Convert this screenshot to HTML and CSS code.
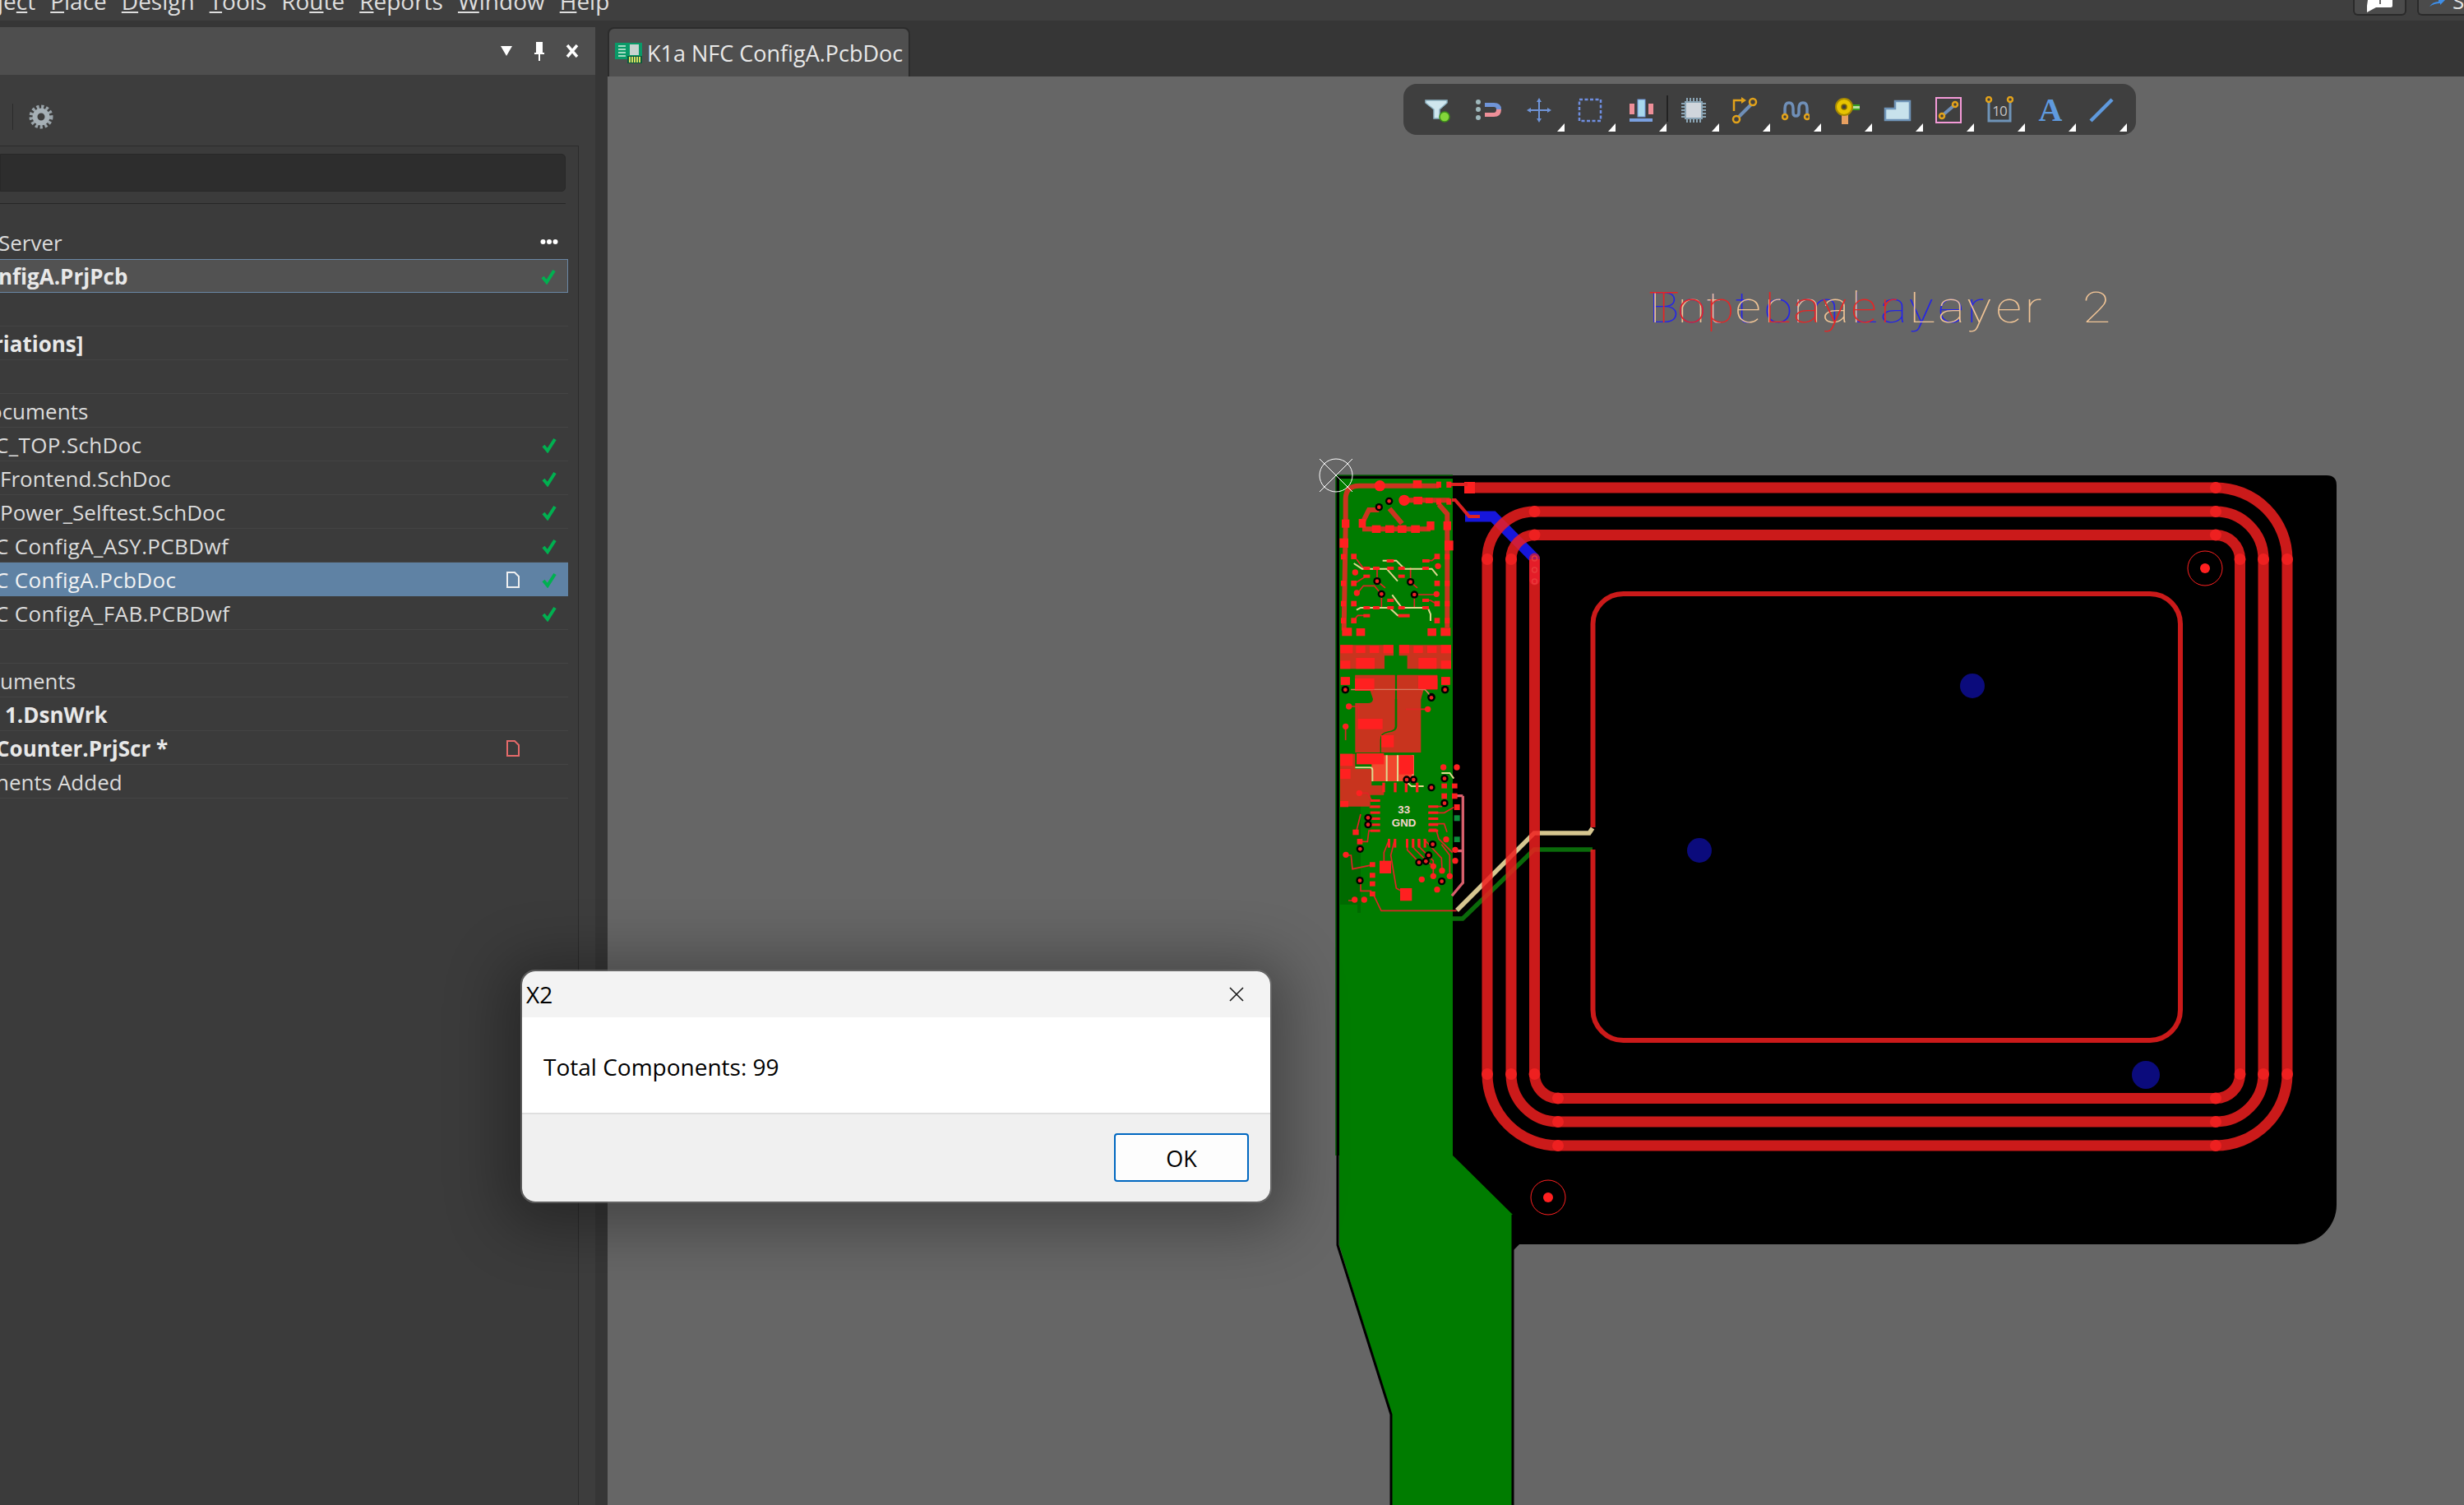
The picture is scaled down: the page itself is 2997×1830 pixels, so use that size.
FILE: index.html
```html
<!DOCTYPE html>
<html lang="en">
<head>
    <meta charset="UTF-8">
    <title>K1a NFC ConfigA.PcbDoc</title>
    <link rel="stylesheet" href="styles.css">
</head>
<body>
    <header class="menu-bar">
        <nav class="menu">
            <span class="menu-first">je<u>c</u>t</span>
            <span><u>P</u>lace</span>
            <span><u>D</u>esign</span>
            <span><u>T</u>ools</span>
            <span>Ro<u>u</u>te</span>
            <span><u>R</u>eports</span>
            <span><u>W</u>indow</span>
            <span><u>H</u>elp</span>
        </nav>
        <div class="top-buttons">
            <div class="top-btn">
                <svg width="34" height="19" viewBox="0 0 34 19"><path class="i-white" d="M2 0H32V7Q32 9 30 9H12L1 15V9Q1 9 1 7Z"/><path class="i-plus" d="M17 0V5"/></svg>
            </div>
            <div class="top-btn top-btn-share">
                <svg width="20" height="8" viewBox="0 0 20 8"><path class="i-share" d="M0 8Q4 2 11 2V0L19 0L13 6V4Q6 4 0 8Z"/></svg>
                <span>Share</span>
            </div>
        </div>
    </header>

    <main class="main">
        <aside class="panel">
            <div class="panel-head">
                <svg width="16" height="14" viewBox="0 0 16 14"><path class="i-white" d="M1 1H15L8 13Z"/></svg>
                <svg width="14" height="24" viewBox="0 0 14 24"><path class="i-white" d="M3 1H11V14H13V16H8V24H6V16H1V14H3Z"/></svg>
                <svg width="16" height="16" viewBox="0 0 16 16"><path class="i-close" d="M2 1L14 15M14 1L2 15"/></svg>
            </div>
            <div class="panel-tools">
                <span class="tool-sep"></span>
                <svg class="gear" width="30" height="30" viewBox="0 0 30 30">
                    <circle class="gear-teeth" cx="15" cy="15" r="11.5"/>
                    <circle class="gear-ring" cx="15" cy="15" r="7.5"/>
                </svg>
            </div>
            <div class="project-box">
                <div class="search"></div>
                <div class="search-line"></div>
                <div class="tree">
                    <div class="row"><span class="name clip-1">Server</span><span></span><svg class="dots" width="22" height="8" viewBox="0 0 22 8"><circle cx="3.5" cy="4" r="3"/><circle cx="11" cy="4" r="3"/><circle cx="18.5" cy="4" r="3"/></svg></div>
                    <div class="row row-bold row-active"><span class="name clip-1">nfigA.PrjPcb</span><span></span><svg class="check" width="18" height="20" viewBox="0 0 18 20"><path d="M2 11L7 17L16 3"/></svg></div>
                    <div class="row"></div>
                    <div class="row row-bold"><span class="name clip-4">riations]</span></div>
                    <div class="row"></div>
                    <div class="row"><span class="name clip-5">ocuments</span></div>
                    <div class="row"><span class="name clip-3">C_TOP.SchDoc</span><span></span><svg class="check" width="18" height="20" viewBox="0 0 18 20"><path d="M2 11L7 17L16 3"/></svg></div>
                    <div class="row"><span class="name">Frontend.SchDoc</span><span></span><svg class="check" width="18" height="20" viewBox="0 0 18 20"><path d="M2 11L7 17L16 3"/></svg></div>
                    <div class="row"><span class="name">Power_Selftest.SchDoc</span><span></span><svg class="check" width="18" height="20" viewBox="0 0 18 20"><path d="M2 11L7 17L16 3"/></svg></div>
                    <div class="row"><span class="name clip-3">C ConfigA_ASY.PCBDwf</span><span></span><svg class="check" width="18" height="20" viewBox="0 0 18 20"><path d="M2 11L7 17L16 3"/></svg></div>
                    <div class="row row-selected"><span class="name clip-3">C ConfigA.PcbDoc</span><svg class="doc" width="18" height="20" viewBox="0 0 18 20"><path d="M2 1H11L16 6V19H2Z"/></svg><svg class="check" width="18" height="20" viewBox="0 0 18 20"><path d="M2 11L7 17L16 3"/></svg></div>
                    <div class="row"><span class="name clip-3">C ConfigA_FAB.PCBDwf</span><span></span><svg class="check" width="18" height="20" viewBox="0 0 18 20"><path d="M2 11L7 17L16 3"/></svg></div>
                    <div class="row"></div>
                    <div class="row"><span class="name">uments</span></div>
                    <div class="row row-bold"><span class="name name-in">1.DsnWrk</span></div>
                    <div class="row row-bold"><span class="name clip-2">Counter.PrjScr *</span><svg class="doc doc-red" width="18" height="20" viewBox="0 0 18 20"><path d="M2 1H11L16 6V19H2Z"/></svg></div>
                    <div class="row"><span class="name clip-2">nents Added</span></div>
                </div>
            </div>
        </aside>

        <section class="workspace">
            <div class="tabs">
                <div class="tab">
                    <svg class="tab-icon" width="34" height="26" viewBox="0 0 34 26">
                        <rect x="0" y="1" width="33" height="20" fill="#0a9a68"/>
                        <path d="M4 5H13M4 9H13M4 13H13M4 17H13" stroke="#d8f0e0" stroke-width="1.5"/>
                        <rect x="18" y="3" width="11" height="13" fill="#c8d4d0"/>
                        <rect x="15" y="17" width="18" height="9" fill="#0a5a3c"/>
                        <path d="M18 18V25M21 18V25M24 18V25M27 18V25M30 18V25" stroke="#d8e060" stroke-width="2"/>
                    </svg>
                    <span>K1a NFC ConfigA.PcbDoc</span>
                </div>
            </div>
            <div class="canvas">
                <svg class="pcb" width="2258" height="1737" viewBox="739 93 2258 1737">
                    <!-- overlaid layer names, glyphs stretched to the wide stroke font -->
                    <g class="layer-text" transform="translate(2005 392) scale(1.2 1)">
                        <text class="lt-blue" x="0 29.3 58.7 88 117.3 146.7 176 205.300 234.700 264 293.300 322.700" y="0">Bottom Layer</text>
                        <text class="lt-tan" x="0 29.3 58.7 88 117.3 146.7 176 205.300 234.700 264 293.300 322.700 352 381.300 410.700 440" y="0">Internal Layer 2</text>
                        <text class="lt-red" x="0 29.3 58.7 88 117.3 146.7 176 205.300 234.700" y="0">Top Layer</text>
                    </g>

                    <!-- board outline -->
                    <path class="board" d="M1625 578H2830Q2842 578 2842 590V1465A49 48 0 0 1 2793 1513H1848L1841 1520V1560H1767V1405L1625 1405Z"/>
                    <path class="flex" d="M1629 582H1767V1405L1840 1477V1830H1692V1720L1629 1514Z"/>
                    <path class="flex-shade" d="M1630 980H1653V1100H1630ZM1651 980H1655V1110H1651Z"/>
                    <path class="flex-edge" d="M1627 582V1514L1692 1720V1830M1840 1477V1830"/>
                    <path class="flex-line" d="M1625 1405V578H1767"/>

                    <!-- traces under the coil -->
                    <path class="t-tan" d="M1937 1007L1933 1013H1866L1772 1107"/>
                    <path class="t-green" d="M1937 1033H1866L1779 1117H1767"/>
                    <path class="t-blue" d="M1782 628H1816L1866.5 679"/>
                    <path class="t-blue-via" d="M1866.5 679V705"/>

                    <!-- coil -->
                    <path class="coil" d="M1787 593H2695A87 87 0 0 1 2782 680V1306A87 87 0 0 1 2695 1393H1895A86 87 0 0 1 1809 1306V680A57.5 58 0 0 1 1866.5 622H2695A58 58 0 0 1 2753 680V1306A58 58 0 0 1 2695 1364H1895A57 58 0 0 1 1838 1306V680A29 29.5 0 0 1 1866.5 650.5H2695A29.5 29.5 0 0 1 2724.5 680V1306A29.5 29.5 0 0 1 2695 1335.5H1895A28.5 29.5 0 0 1 1866.5 1306V680"/>
                    <rect class="pad" x="1781" y="586" width="13" height="14"/>
                    <g class="node">
                        <circle cx="2695" cy="593" r="7"/><circle cx="2695" cy="622" r="7"/><circle cx="2695" cy="650.5" r="7"/>
                        <circle cx="2782" cy="680" r="7"/><circle cx="2753" cy="680" r="7"/><circle cx="2724.5" cy="680" r="7"/>
                        <circle cx="2782" cy="1306" r="7"/><circle cx="2753" cy="1306" r="7"/><circle cx="2724.5" cy="1306" r="7"/>
                        <circle cx="2695" cy="1393" r="7"/><circle cx="2695" cy="1364" r="7"/><circle cx="2695" cy="1335.5" r="7"/>
                        <circle cx="1895" cy="1393" r="7"/><circle cx="1895" cy="1364" r="7"/><circle cx="1895" cy="1335.5" r="7"/>
                        <circle cx="1809" cy="1306" r="7"/><circle cx="1838" cy="1306" r="7"/><circle cx="1866.5" cy="1306" r="7"/>
                        <circle cx="1809" cy="680" r="7"/><circle cx="1838" cy="680" r="7"/>
                        <circle cx="1866.5" cy="622" r="7"/><circle cx="1866.5" cy="650.5" r="7"/>
                    </g>
                    <path class="coil coil-inner" d="M1937.5 1006V760A37 37 0 0 1 1975 722H2615A37 37 0 0 1 2652 760V1228A37 37 0 0 1 2615 1265H1975A37 37 0 0 1 1937.5 1228V1033"/>
                    <path class="t-thin" d="M1762 589H1785M1766 608H1770L1787 628H1800"/>
                    <circle class="via-hole" cx="1866.5" cy="679" r="3"/><circle class="via-hole" cx="1866.5" cy="693" r="3"/><circle class="via-hole" cx="1866.5" cy="707" r="3"/>

                    <!-- fiducials and mounting holes -->
                    <circle class="fid" cx="2399" cy="834" r="15"/>
                    <circle class="fid" cx="2067" cy="1034" r="15"/>
                    <circle class="fid" cx="2610" cy="1307" r="17"/>
                    <circle class="mount" cx="2682" cy="691" r="21"/><circle class="pad" cx="2682" cy="691" r="6"/>
                    <circle class="mount" cx="1883" cy="1456" r="21"/><circle class="pad" cx="1883" cy="1456" r="6"/>

                    <!-- upper part of the flex -->
                    <g transform="translate(1600 550) scale(.3333)">
                        <path class="copper" d="M90 703H285V742H252V790H90ZM305 703H495V790H335V742H305ZM145 812H290V900H210L200 870H145ZM298 812H445V865H395L385 900H298Z"/>
                        <path class="tr-w" d="M104 650L110 270V170Q110 122 160 122H450M324 175H490M450 190L481 225V640M171 258L195 210H232M270 205L316 260M171 280H420"/>
                        <path class="tr-n" d="M150 390L175 423M140 480L185 452M155 512L175 487H215L240 517M225 470L255 495M347 473L372 495M361 519H440M390 540H420L440 552M140 612L155 595H195M390 395H425L443 380M241 517V570M347 473V420M361 519V570M225 470V425"/>
                        <path class="tr-tan" d="M140 405L170 425H260L300 470M245 395H295L325 425H425L445 450M150 575L165 567H270L300 595H340M280 520L315 567H410L420 590V615"/>
                        <path class="tr-salmon" d="M130 866H400L420 885"/>
                        <g class="pad">
                            <circle cx="235" cy="122" r="20"/><circle cx="324" cy="175" r="20"/>
                            <rect x="356" y="102" width="32" height="28"/><rect x="441" y="107" width="18" height="22"/><rect x="478" y="107" width="18" height="22"/>
                            <rect x="358" y="162" width="32" height="28"/><rect x="402" y="166" width="26" height="20"/><rect x="441" y="169" width="18" height="22"/><rect x="478" y="169" width="18" height="22"/>
                            <rect x="96" y="245" width="28" height="30"/><rect x="88" y="314" width="32" height="34"/><rect x="93" y="371" width="18" height="20"/><rect x="93" y="468" width="18" height="20"/><rect x="93" y="542" width="18" height="20"/><rect x="93" y="604" width="18" height="20"/>
                            <rect x="97" y="640" width="36" height="30"/><rect x="149" y="642" width="32" height="28"/>
                            <rect x="467" y="252" width="28" height="32"/><rect x="471" y="322" width="32" height="36"/><rect x="472" y="371" width="18" height="20"/><rect x="472" y="468" width="18" height="20"/><rect x="472" y="542" width="18" height="20"/><rect x="472" y="604" width="18" height="20"/>
                            <rect x="457" y="640" width="36" height="30"/><rect x="409" y="642" width="32" height="28"/>
                            <rect x="158" y="243" width="26" height="32"/><rect x="206" y="266" width="32" height="28"/><rect x="255" y="266" width="32" height="28"/><rect x="300" y="266" width="32" height="28"/><rect x="349" y="266" width="32" height="28"/><rect x="406" y="252" width="28" height="32"/>
                            <rect x="130" y="370" width="20" height="20"/><rect x="434" y="370" width="20" height="20"/>
                            <rect x="130" y="468" width="20" height="20"/><rect x="434" y="468" width="20" height="20"/>
                            <rect x="130" y="542" width="20" height="20"/><rect x="434" y="542" width="20" height="20"/>
                            <rect x="130" y="604" width="20" height="20"/><rect x="434" y="604" width="20" height="20"/>
                            <circle cx="145" cy="438" r="11"/><circle cx="447" cy="415" r="11"/><circle cx="151" cy="513" r="11"/><circle cx="442" cy="517" r="11"/>
                            <rect x="175" y="417" width="24" height="12"/><rect x="210" y="417" width="24" height="12"/><rect x="262" y="417" width="24" height="12"/><rect x="302" y="417" width="24" height="12"/><rect x="390" y="417" width="24" height="12"/>
                            <rect x="175" y="561" width="24" height="12"/><rect x="210" y="561" width="24" height="12"/><rect x="262" y="561" width="24" height="12"/><rect x="302" y="561" width="24" height="12"/><rect x="390" y="561" width="24" height="12"/>
                            <rect x="260" y="390" width="26" height="12"/><rect x="390" y="390" width="26" height="12"/><rect x="175" y="446" width="24" height="12"/><rect x="302" y="446" width="24" height="12"/><rect x="262" y="534" width="24" height="12"/><rect x="390" y="534" width="24" height="12"/><rect x="175" y="590" width="24" height="12"/><rect x="302" y="590" width="42" height="12"/>
                            <rect x="91" y="703" width="45" height="30"/><rect x="148" y="706" width="34" height="26"/><rect x="198" y="706" width="34" height="26"/><rect x="248" y="703" width="36" height="30"/>
                            <rect x="306" y="703" width="36" height="30"/><rect x="358" y="706" width="34" height="26"/><rect x="408" y="706" width="34" height="26"/><rect x="458" y="703" width="37" height="30"/>
                            <rect x="91" y="760" width="36" height="30"/><rect x="148" y="750" width="68" height="40"/><rect x="376" y="750" width="66" height="40"/><rect x="458" y="760" width="37" height="30"/>
                            <rect x="93" y="820" width="32" height="28"/><rect x="459" y="820" width="32" height="28"/><rect x="145" y="825" width="70" height="45"/><rect x="375" y="825" width="70" height="40"/>
                        </g>
                        <g class="via"><circle cx="232" cy="200" r="14"/><circle cx="269" cy="178" r="14"/><circle cx="225" cy="470" r="14"/><circle cx="347" cy="473" r="14"/><circle cx="241" cy="517" r="14"/><circle cx="361" cy="519" r="14"/><circle cx="109" cy="866" r="14"/><circle cx="473" cy="866" r="14"/><circle cx="423" cy="892" r="14"/></g>
                        <g class="via-c"><circle cx="232" cy="200" r="7"/><circle cx="269" cy="178" r="7"/><circle cx="225" cy="470" r="7"/><circle cx="347" cy="473" r="7"/><circle cx="241" cy="517" r="7"/><circle cx="361" cy="519" r="7"/><circle cx="109" cy="866" r="7"/><circle cx="473" cy="866" r="7"/><circle cx="423" cy="892" r="7"/></g>
                    </g>

                    <!-- chip area of the flex -->
                    <g transform="translate(1600 820) scale(.3333)">
                        <path class="copper" d="M145 5H290V190Q290 205 265 208Q236 212 236 240V285H145V105H190Q210 105 210 90V55H145ZM298 5H385V285H240V240Q240 215 265 212Q298 210 298 190ZM90 290H145V345H205V405H250V440H200V482H90Z"/>
                        <path class="copper-lite" d="M205 295H360V390H205Z"/>
                        <path class="tr-n" d="M122 117H158V180M330 127H410M110 190V240M160 433H190L205 460H235M197 485H235M165 510L150 570M160 610H190L195 570H235M270 600L250 650V690M290 600L275 660L295 780L330 800M335 600V640L378 686M355 600V630L405 680L430 700M375 600V625L430 680V735M395 600L460 670L462 715M460 620L490 660V735M415 545H470L480 575M415 565H440L450 600L500 650M412 482H460L470 470M412 505H470L505 485M110 660H130L135 710L208 695M210 800L240 862H515M165 750V790H205M120 825H145"/>
                        <path class="tr-tan" d="M145 340H200Q208 340 208 350V390M260 295V390M300 295V390M355 295V370M330 390L350 408H395M460 360H490L505 380"/>
                        <path class="tr-salmon" d="M130 55H400L420 80"/>
                        <path class="tr-pink" d="M538 443V760L498 808M508 443H538M508 644H538"/>
                        <g class="pad">
                            <rect x="92" y="10" width="34" height="28"/><rect x="459" y="10" width="32" height="28"/><rect x="145" y="15" width="70" height="40"/><rect x="375" y="5" width="70" height="48"/>
                            <circle cx="122" cy="117" r="11"/><circle cx="410" cy="127" r="11"/><circle cx="110" cy="190" r="11"/>
                            <rect x="155" y="162" width="90" height="38"/><rect x="240" y="222" width="46" height="44"/>
                            <rect x="150" y="288" width="100" height="40"/><rect x="90" y="290" width="46" height="44"/><rect x="90" y="345" width="38" height="36"/><rect x="90" y="462" width="30" height="22"/>
                            <rect x="306" y="295" width="52" height="70"/>
                            <circle cx="467" cy="339" r="11"/><circle cx="516" cy="339" r="11"/><circle cx="160" cy="433" r="11"/>
                            <rect x="460" y="398" width="20" height="18"/><rect x="498" y="398" width="20" height="18"/><rect x="460" y="434" width="20" height="20"/><rect x="498" y="434" width="20" height="20"/><rect x="506" y="474" width="21" height="21"/>
                            <rect x="136" y="566" width="22" height="20"/><rect x="152" y="600" width="20" height="20"/>
                            <circle cx="477" cy="602" r="11"/><circle cx="510" cy="640" r="11"/><circle cx="510" cy="680" r="11"/><circle cx="111" cy="658" r="11"/>
                            <rect x="234" y="680" width="42" height="46"/><rect x="309" y="780" width="43" height="46"/>
                            <rect x="198" y="685" width="20" height="18"/><rect x="198" y="724" width="20" height="18"/><rect x="198" y="755" width="20" height="18"/><rect x="198" y="792" width="20" height="18"/>
                            <circle cx="430" cy="700" r="11"/><circle cx="430" cy="736" r="11"/><circle cx="462" cy="716" r="11"/><circle cx="490" cy="736" r="11"/><circle cx="388" cy="748" r="11"/><circle cx="444" cy="785" r="11"/><circle cx="143" cy="822" r="11"/><circle cx="178" cy="822" r="11"/>
                            <rect x="244" y="395" width="10" height="35"/><rect x="286" y="395" width="10" height="35"/><rect x="326" y="395" width="10" height="35"/><rect x="366" y="395" width="10" height="35"/>
                            <rect x="200" y="456" width="36" height="9"/><rect x="200" y="478" width="36" height="9"/><rect x="200" y="500" width="36" height="9"/><rect x="200" y="522" width="36" height="9"/><rect x="200" y="544" width="36" height="9"/><rect x="200" y="566" width="36" height="9"/>
                            <rect x="412" y="478" width="36" height="9"/><rect x="412" y="500" width="36" height="9"/><rect x="412" y="522" width="36" height="9"/><rect x="412" y="544" width="36" height="9"/><rect x="412" y="566" width="36" height="9"/>
                            <rect x="264" y="600" width="9" height="32"/><rect x="286" y="600" width="9" height="32"/><rect x="330" y="600" width="9" height="32"/><rect x="352" y="600" width="9" height="32"/><rect x="374" y="600" width="9" height="32"/><rect x="395" y="600" width="9" height="32"/>
                        </g>
                        <g class="pad-green"><rect x="506" y="514" width="21" height="21"/><rect x="506" y="592" width="21" height="20"/></g>
                        <g class="via"><circle cx="109" cy="56" r="14"/><circle cx="473" cy="56" r="14"/><circle cx="423" cy="85" r="14"/><circle cx="333" cy="384" r="14"/><circle cx="358" cy="384" r="14"/><circle cx="423" cy="413" r="14"/><circle cx="471" cy="380" r="14"/><circle cx="471" cy="470" r="14"/><circle cx="192" cy="523" r="14"/><circle cx="192" cy="548" r="14"/><circle cx="163" cy="637" r="14"/><circle cx="428" cy="620" r="14"/><circle cx="413" cy="660" r="14"/><circle cx="378" cy="686" r="14"/><circle cx="403" cy="682" r="14"/><circle cx="461" cy="755" r="14"/><circle cx="162" cy="752" r="14"/></g>
                        <g class="via-c"><circle cx="109" cy="56" r="7"/><circle cx="473" cy="56" r="7"/><circle cx="423" cy="85" r="7"/><circle cx="333" cy="384" r="7"/><circle cx="358" cy="384" r="7"/><circle cx="423" cy="413" r="7"/><circle cx="471" cy="380" r="7"/><circle cx="471" cy="470" r="7"/><circle cx="192" cy="523" r="7"/><circle cx="192" cy="548" r="7"/><circle cx="163" cy="637" r="7"/><circle cx="428" cy="620" r="7"/><circle cx="413" cy="660" r="7"/><circle cx="378" cy="686" r="7"/><circle cx="403" cy="682" r="7"/><circle cx="461" cy="755" r="7"/><circle cx="162" cy="752" r="7"/></g>
                        <text class="silk" x="323" y="508">33</text>
                        <text class="silk" x="323" y="554">GND</text>
                    </g>

                    <!-- origin marker -->
                    <g class="origin"><circle cx="1625" cy="578" r="20"/><path d="M1605 558L1645 598M1645 558L1605 598"/></g>
                </svg>

                <div class="pcb-toolbar">
                    <div class="tool"><svg width="34" height="34" viewBox="0 0 34 34"><path fill="#cfe6ee" stroke="#8fb4c4" stroke-width="1.5" d="M3 5H29V8L20 16V27H13V16L3 8Z"/><circle cx="26" cy="25" r="6" fill="#84d63a" stroke="#3f8f1a" stroke-width="1.5"/></svg></div>
                    <div class="tool"><svg width="34" height="34" viewBox="0 0 34 34"><circle cx="5" cy="7" r="3" fill="#9fb8bc"/><circle cx="5" cy="16" r="3" fill="#9fb8bc"/><circle cx="5" cy="26" r="3" fill="#9fb8bc"/><path fill="#6f94d8" d="M13 8H24Q33 8 33 16H27Q27 13 24 13H13Z"/><path fill="#ee8f98" d="M13 20H24Q27 20 27 16H33Q33 25 24 25H13Z"/></svg></div>
                    <div class="tool tool-more"><svg width="34" height="34" viewBox="0 0 34 34"><path class="i-move" d="M17 4V30M4 17H30"/><path class="i-move-head" d="M17 2L20 7H14ZM17 32L20 27H14ZM2 17L7 14V20ZM32 17L27 14V20Z"/></svg></div>
                    <div class="tool tool-more"><svg width="34" height="34" viewBox="0 0 34 34"><rect class="i-dash" x="4" y="4" width="26" height="26"/></svg></div>
                    <div class="tool tool-more"><svg width="34" height="34" viewBox="0 0 34 34"><rect x="3" y="9" width="6" height="13" fill="#ee8f98"/><rect x="26" y="9" width="6" height="13" fill="#ee8f98"/><rect x="13" y="4" width="9" height="21" fill="#a8d8ec" stroke="#6f94d8"/><rect x="3" y="27" width="28" height="4" fill="#7aa0e0"/></svg></div>
                    <span class="tool-line"></span>
                    <div class="tool tool-more"><svg width="34" height="34" viewBox="0 0 34 34"><path class="i-pins" d="M9 2V32M13 2V32M17 2V32M21 2V32M25 2V32M2 9H32M2 13H32M2 17H32M2 21H32M2 25H32"/><rect x="6" y="6" width="22" height="22" fill="#8aa4b4"/><rect x="8" y="8" width="18" height="18" fill="#d0d6dc"/></svg></div>
                    <div class="tool tool-more"><svg width="34" height="34" viewBox="0 0 34 34"><path class="i-trace" d="M9 26L26 9"/><path class="i-route" d="M4 18V5H14"/><path fill="#e2a21a" d="M13 1L19 5L13 9Z"/><circle class="i-ring" cx="7" cy="28" r="4"/><circle class="i-ring" cx="27" cy="7" r="4"/></svg></div>
                    <div class="tool tool-more"><svg width="34" height="34" viewBox="0 0 34 34"><path class="i-wave" d="M4 22V15Q4 8 9 8T14 15V20Q14 24 17.500 24T21 20V15Q21 8 26 8T31 15V22"/><circle class="i-ring" cx="4" cy="25" r="3"/><circle class="i-ring" cx="31" cy="25" r="3"/></svg></div>
                    <div class="tool tool-more"><svg width="34" height="34" viewBox="0 0 34 34"><rect x="19" y="10" width="14" height="7" fill="#38a020"/><rect x="19" y="12" width="14" height="3" fill="#b8e0a0"/><rect x="11" y="22" width="8" height="12" fill="#e8a060"/><circle cx="14" cy="13" r="10" fill="#e8c400" stroke="#a88a00" stroke-width="2"/><circle cx="14" cy="13" r="3" fill="#3f3f3f" stroke="#806800" stroke-width="1.5"/></svg></div>
                    <div class="tool tool-more"><svg width="34" height="34" viewBox="0 0 34 34"><path fill="#c8e2ec" stroke="#6f94b8" stroke-width="2.5" d="M2 15H14V6H32V29H2Z"/></svg></div>
                    <div class="tool tool-more"><svg width="34" height="34" viewBox="0 0 34 34"><rect x="2" y="2" width="30" height="30" fill="none" stroke="#f49ad8" stroke-width="2"/><path class="i-trace" d="M10 23L24 11"/><circle class="i-ring" cx="9" cy="24" r="3"/><circle class="i-ring" cx="25" cy="10" r="3"/></svg></div>
                    <div class="tool tool-more"><svg width="34" height="34" viewBox="0 0 34 34"><path fill="none" stroke="#6f94b8" stroke-width="3" d="M4 6V30H30V6"/><circle class="i-ring" cx="4" cy="4" r="3"/><circle class="i-ring" cx="30" cy="4" r="3"/><text class="i-ten" x="17" y="24">10</text></svg></div>
                    <div class="tool tool-more"><span class="i-letter">A</span></div>
                    <div class="tool tool-more"><svg width="34" height="34" viewBox="0 0 34 34"><path class="i-line" d="M4 30L30 4"/></svg></div>
                </div>
            </div>
        </section>
    </main>

    <div class="dialog">
        <div class="dialog-title"><span>X2</span><svg width="22" height="22" viewBox="0 0 22 22"><path class="i-x" d="M3 3L19 19M19 3L3 19"/></svg></div>
        <div class="dialog-body">Total Components: 99</div>
        <div class="dialog-foot"><button class="ok-btn" type="button">OK</button></div>
    </div>
</body>
</html>
```

FILE: styles.css
```css
* {
    box-sizing: border-box;
}

html, body {
    margin: 0;
    padding: 0;
}

body {
    width: 2997px;
    height: 1830px;
    overflow: hidden;
    position: relative;
    display: flex;
    flex-direction: column;
    font-family: "Open Sans", "Noto Sans", sans-serif;
    background-color: #363636;
    color: #e4e4e4;
}

/* Menu bar, cut off by the top of the picture */
.menu-bar {
    height: 25px;
    flex: none;
    overflow: hidden;
    display: flex;
    justify-content: space-between;
    background-color: #3f3f3f;
}

.menu {
    display: flex;
    gap: 18px;
    margin-top: -16px;
    font-size: 28px;
    line-height: 34px;
    color: #dedede;
}

.menu-first {
    margin-left: -3px;
}

.top-buttons {
    display: flex;
    gap: 13px;
}

.top-btn {
    width: 65px;
    height: 19px;
    background-color: #4b4b4b;
    border: 2px solid #2a2a2a;
    border-top: none;
    border-radius: 0 0 6px 6px;
    display: flex;
    justify-content: center;
}

.top-btn svg {
    flex: none;
}

.top-btn-share {
    width: 70px;
    margin-right: -13px;
    border-right: none;
    border-radius: 0 0 0 6px;
    justify-content: flex-start;
    padding-left: 13px;
    gap: 8px;
    font-size: 26px;
    line-height: 2px;
}

.i-white { fill: #fff; }
.i-plus { stroke: #666; stroke-width: 2; }
.i-share { fill: #3d8ee8; }
.i-close { fill: none; stroke: #fff; stroke-width: 3.5; }

.main {
    flex: 1;
    display: flex;
    min-height: 0;
    padding-top: 8px;
}

/* Left panel */
.panel {
    width: 724px;
    flex: none;
    display: flex;
    flex-direction: column;
    background-color: #3d3d3d;
}

.panel-head {
    height: 58px;
    flex: none;
    display: flex;
    justify-content: flex-end;
    align-items: center;
    gap: 25px;
    padding-right: 20px;
    background-color: #4e4e4e;
}

.panel-tools {
    height: 86px;
    flex: none;
    display: flex;
    align-items: center;
    gap: 19px;
    padding-left: 15px;
    padding-top: 16px;
}

.tool-sep {
    width: 1px;
    height: 32px;
    background-color: #2b2b2b;
}

.gear-teeth {
    fill: none;
    stroke: #9aa4aa;
    stroke-width: 6;
    stroke-dasharray: 3 2.4;
}

.gear-ring {
    fill: #3d3d3d;
    stroke: #a6b0b6;
    stroke-width: 6;
}

.project-box {
    flex: 1;
    margin-right: 20px;
    border-top: 1px solid #2b2b2b;
    border-right: 1px solid #2b2b2b;
    padding-top: 9px;
    background-color: #3b3b3b;
}

.search {
    height: 46px;
    margin-right: 15px;
    background-color: #2d2d2d;
    border: 1px solid #282828;
    border-radius: 0 5px 5px 0;
}

.search-line {
    height: 1px;
    margin: 14px 15px 26px 0;
    background-color: #262626;
}

.tree {
    margin-right: 12px;
}

.row {
    height: 41px;
    display: grid;
    grid-template-columns: 1fr 44px 44px;
    align-items: center;
    justify-items: center;
    padding: 1px 1px 0 0;
    border-bottom: 1px solid #444;
    font-size: 26px;
    white-space: nowrap;
    color: #dcdcdc;
}

.row:first-child {
    border-bottom-color: transparent;
}

.name {
    justify-self: start;
}

.clip-1 { margin-left: -2px; }
.clip-2 { margin-left: -5px; }
.clip-3 { margin-left: -6px; letter-spacing: 0.35px; }
.clip-4 { margin-left: -8px; }
.clip-5 { margin-left: -13px; }
.name-in { margin-left: 6px; }

.row-bold {
    font-weight: 700;
    color: #e8e8e8;
}

.row-active {
    background-color: #525252;
    border: 1px solid #6a87a5;
    border-left: none;
}

.row-selected {
    background-color: #5f82a4;
    border-bottom-color: #5f82a4;
    color: #f2f2f2;
}

.dots {
    fill: #fff;
    margin-top: -2px;
}

.check path {
    fill: none;
    stroke: #00b050;
    stroke-width: 4;
}

.doc path {
    fill: none;
    stroke: #efefef;
    stroke-width: 2;
}

.doc-red path {
    stroke: #e56a6a;
}

/* Document area */
.workspace {
    flex: 1;
    margin-left: 15px;
    display: flex;
    flex-direction: column;
    min-width: 0;
}

.tabs {
    height: 60px;
    flex: none;
    display: flex;
}

.tab {
    width: 368px;
    display: flex;
    align-items: center;
    gap: 5px;
    padding-left: 7px;
    background-color: #4f4f4f;
    border: 2px solid #2c2c2c;
    border-bottom: none;
    border-radius: 8px 8px 0 0;
    font-size: 27px;
    white-space: nowrap;
    color: #e8e8e8;
}

.canvas {
    flex: 1;
    position: relative;
    background-color: #666;
    overflow: hidden;
}

.pcb {
    position: absolute;
    top: 0;
    left: 0;
}

/* Toolbar floating over the board */
.pcb-toolbar {
    position: absolute;
    top: 9px;
    left: 968px;
    width: 891px;
    height: 62px;
    padding: 0 0 0 10px;
    display: flex;
    align-items: flex-start;
    background-color: #3f3f3f;
    border-radius: 16px;
}

.tool {
    width: 62px;
    height: 62px;
    flex: none;
    position: relative;
    display: flex;
    justify-content: center;
    padding-top: 15px;
}

.tool-more::after {
    content: "";
    position: absolute;
    right: 0;
    bottom: 4px;
    width: 9px;
    height: 10px;
    background-color: #fff;
    clip-path: polygon(100% 0, 100% 100%, 0 100%);
}

.tool-line {
    width: 2px;
    height: 32px;
    flex: none;
    margin-top: 14px;
    background-color: #222;
}

.i-move { fill: none; stroke: #6f94d8; stroke-width: 2; }
.i-move-head { fill: #6f94d8; }
.i-dash { fill: none; stroke: #6f8ee0; stroke-width: 2.5; stroke-dasharray: 4 2.5; }
.i-pins { fill: none; stroke: #8aa4b4; stroke-width: 2; }
.i-trace { fill: none; stroke: #6f8fb8; stroke-width: 4; }
.i-wave { fill: none; stroke: #6f8fb8; stroke-width: 3.5; }
.i-route { fill: none; stroke: #e2a21a; stroke-width: 2.5; }
.i-ring { fill: #3f3f3f; stroke: #e2a21a; stroke-width: 2.5; }
.i-ten { font-size: 17px; letter-spacing: -1px; text-anchor: middle; fill: #c4c4c4; font-family: "Open Sans", sans-serif; }
.i-line { fill: none; stroke: #5f9ade; stroke-width: 4.5; }
.i-letter {
    font-family: "Liberation Serif", serif;
    font-weight: 700;
    font-size: 40px;
    line-height: 34px;
    color: #5f9ade;
}

/* Board drawing */
.layer-text text {
    font-family: Roboto, sans-serif;
    font-weight: 100;
    font-size: 52px;
}

.lt-blue { fill: #2424e8; }
.lt-red { fill: #e82424; }
.lt-tan { fill: #f0c496; }

.board { fill: #000; }
.flex { fill: #007c00; }
.flex-shade { fill: #006a00; }
.flex-edge { fill: none; stroke: #000; stroke-width: 3; }
.flex-line { fill: none; stroke: #005c00; stroke-width: 1.5; }

.t-tan { fill: none; stroke: #d6c690; stroke-width: 5.5; }
.t-green { fill: none; stroke: #0a6a0a; stroke-width: 5.5; }
.t-blue { fill: none; stroke: #1616dc; stroke-width: 13; }
.t-blue-via { fill: none; stroke: #a81a5c; stroke-width: 13; stroke-linecap: round; }

.coil { fill: none; stroke: #ee1e1e; stroke-width: 13; opacity: 0.85; }
.coil-inner { stroke-width: 6; }
.node { fill: #ee2020; }
.pad { fill: #ff2020; }
.pad-green { fill: #0c8c3c; }
.t-thin { fill: none; stroke: #dd2222; stroke-width: 4; }
.via-hole { fill: none; stroke: #e83a3a; stroke-width: 1.5; }

.fid { fill: #0b0b7c; }
.mount { fill: none; stroke: #ff2020; stroke-width: 1; }

.copper { fill: #c8341e; }
.copper-lite { fill: #f0482e; }
.tr-w { fill: none; stroke: #cc3420; stroke-width: 18; }
.tr-n { fill: none; stroke: #e02424; stroke-width: 5; }
.tr-tan { fill: none; stroke: #e0d890; stroke-width: 6; }
.tr-salmon { fill: none; stroke: #d87860; stroke-width: 4; }
.tr-pink { fill: none; stroke: #d8606c; stroke-width: 10; }
.via { fill: #000; }
.via-c { fill: #e82424; }

.silk {
    font-family: "Liberation Sans", sans-serif;
    font-weight: 700;
    font-size: 40px;
    text-anchor: middle;
    fill: #f4d4cc;
}

.origin circle, .origin path {
    fill: none;
    stroke: #fff;
    stroke-width: 1;
}

/* Message box */
.dialog {
    position: absolute;
    left: 635px;
    top: 1181px;
    width: 910px;
    height: 280px;
    display: flex;
    flex-direction: column;
    border-radius: 16px;
    overflow: hidden;
    outline: 2px solid rgba(110, 110, 110, 0.7);
    box-shadow: 0 10px 70px 24px rgba(0, 0, 0, 0.32);
    color: #000;
}

.dialog-title {
    height: 56px;
    flex: none;
    display: flex;
    justify-content: space-between;
    align-items: center;
    padding: 0 30px 0 5px;
    background-color: #f3f3f3;
    font-size: 28px;
}

.i-x { fill: none; stroke: #1a1a1a; stroke-width: 1.6; }

.dialog-body {
    height: 118px;
    flex: none;
    display: flex;
    align-items: center;
    padding: 4px 0 0 26px;
    background-color: #fff;
    border-bottom: 2px solid #dfdfdf;
    font-size: 28px;
}

.dialog-foot {
    flex: 1;
    display: flex;
    justify-content: flex-end;
    align-items: flex-start;
    padding: 23px 26px 0 0;
    background-color: #f0f0f0;
}

.ok-btn {
    width: 164px;
    height: 59px;
    padding-top: 3px;
    background-color: #fdfdfd;
    border: 2px solid #0067c0;
    border-radius: 4px;
    font-family: inherit;
    font-size: 27px;
    color: #000;
}
```
